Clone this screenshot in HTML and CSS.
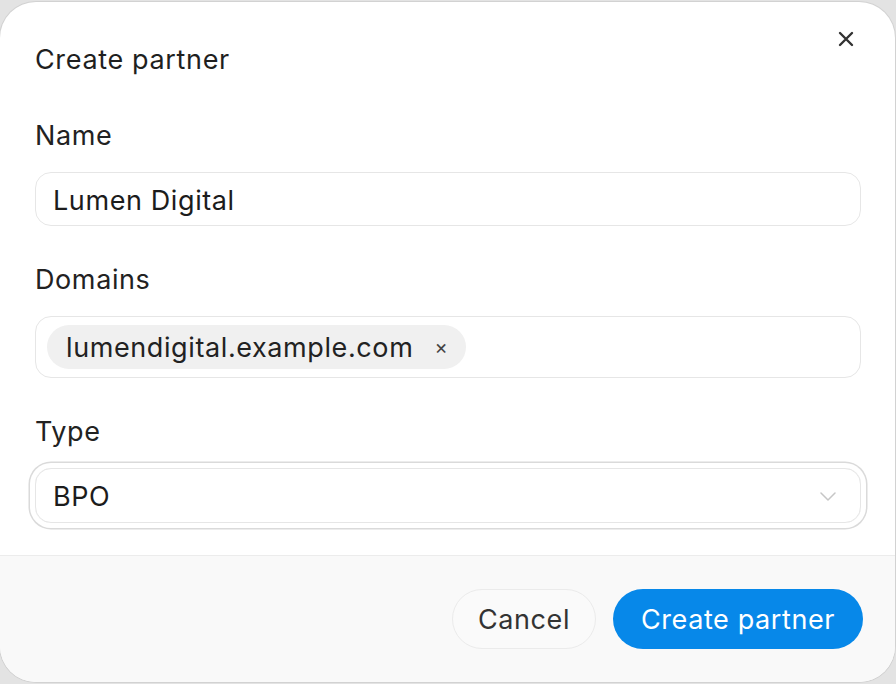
FILE: index.html
```html
<!DOCTYPE html>
<html lang="en">
<head>
<meta charset="utf-8">
<title>Create partner</title>
<link rel="stylesheet" href="styles.css">
</head>
<body>
<div class="modal" role="dialog" aria-labelledby="dlg-title">
  <div class="modal-body">
    <div class="modal-header">
      <h2 class="title" id="dlg-title">Create partner</h2>
      <button class="close" aria-label="Close">
        <svg viewBox="0 0 16 16" width="16" height="16"><path d="M2 2L14 14M14 2L2 14" stroke="currentColor" stroke-width="2.4" stroke-linecap="round" fill="none"/></svg>
      </button>
    </div>
    <div class="field">
      <label class="label">Name</label>
      <div class="input">Lumen Digital</div>
    </div>
    <div class="field">
      <label class="label">Domains</label>
      <div class="input tags">
        <span class="chip">lumendigital.example.com<span class="chip-x">×</span></span>
      </div>
    </div>
    <div class="field">
      <label class="label">Type</label>
      <div class="input select">
        <span>BPO</span>
        <svg class="chev" viewBox="0 0 16 9" width="16" height="9"><path d="M1 1L8 8L15 1" stroke="currentColor" stroke-width="1.5" fill="none" stroke-linecap="round" stroke-linejoin="round"/></svg>
      </div>
    </div>
  </div>
  <div class="modal-footer">
    <button class="btn btn-secondary">Cancel</button>
    <button class="btn btn-primary">Create partner</button>
  </div>
</div>
</body>
</html>
```

FILE: styles.css
```css
* { box-sizing: border-box; }
html, body { margin: 0; padding: 0; }
body {
  background: #e3e3e3;
  font-family: Inter, "Noto Sans", sans-serif;
  color: #222;
  width: 896px;
  height: 684px;
  padding: 2px 1px 2px 0;
}
.modal {
  width: 895px;
  height: 680px;
  background: #fff;
  border-radius: 36px;
  box-shadow: 0 0 0 1px #d2d2d2;
  overflow: hidden;
  display: flex;
  flex-direction: column;
}
.modal-body {
  flex: 1;
  padding: 42px 34px 0 35px;
  display: flex;
  flex-direction: column;
}
.modal-header {
  display: flex;
  justify-content: space-between;
  align-items: flex-start;
  height: 32px;
  margin-bottom: 44px;
}
.title {
  margin: 0;
  font-size: 27px;
  font-weight: 400;
  letter-spacing: 0.65px;
  line-height: 32px;
  color: #1f1f1f;
}
.close {
  border: 0;
  background: none;
  padding: 0;
  margin: -13px 7px 0 0;
  width: 16px;
  height: 16px;
  color: #333;
  display: flex;
}
.field {
  display: flex;
  flex-direction: column;
  margin-bottom: 38px;
}
.field:last-child { margin-bottom: 0; }
.label {
  font-size: 27px;
  font-weight: 400;
  letter-spacing: 0.6px;
  line-height: 32px;
  color: #222;
  margin-bottom: 20px;
}
.input {
  height: 54px;
  border: 1px solid #e6e6e6;
  border-radius: 16px;
  padding: 2px 17px 0;
  font-size: 27px;
  letter-spacing: 0.6px;
  color: #1c1c1c;
  display: flex;
  align-items: center;
}
.tags {
  height: 62px;
  padding: 0 11px;
}
.chip {
  display: inline-flex;
  align-items: center;
  height: 44px;
  padding: 0 18px 0 19px;
  background: #f0f0f0;
  border-radius: 22px;
  font-size: 27px;
  color: #222;
}
.chip-x {
  margin-left: 21px;
  font-size: 20px;
  color: #444;
}
.select {
  height: 55px;
  justify-content: space-between;
  padding-right: 24px;
  box-shadow: 0 0 0 5px #fff, 0 0 0 6.5px #dadada;
}
.chev { color: #c6c6c6; }
.modal-footer {
  height: 127px;
  border-top: 1px solid #ececec;
  background: #f9f9f9;
  display: flex;
  justify-content: flex-end;
  align-items: center;
  gap: 17px;
  padding: 0 32px 0 0;
}
.btn {
  height: 60px;
  border-radius: 30px;
  font-family: Inter, "Noto Sans", sans-serif;
  font-size: 27px;
  font-weight: 400;
  letter-spacing: 0.6px;
  padding: 0;
}
.btn-secondary {
  background: #fafafa;
  border: 1px solid #ebebeb;
  color: #333;
  width: 144px;
}
.btn-primary {
  background: #0788e9;
  border: 0;
  color: #fff;
  width: 250px;
}
```
